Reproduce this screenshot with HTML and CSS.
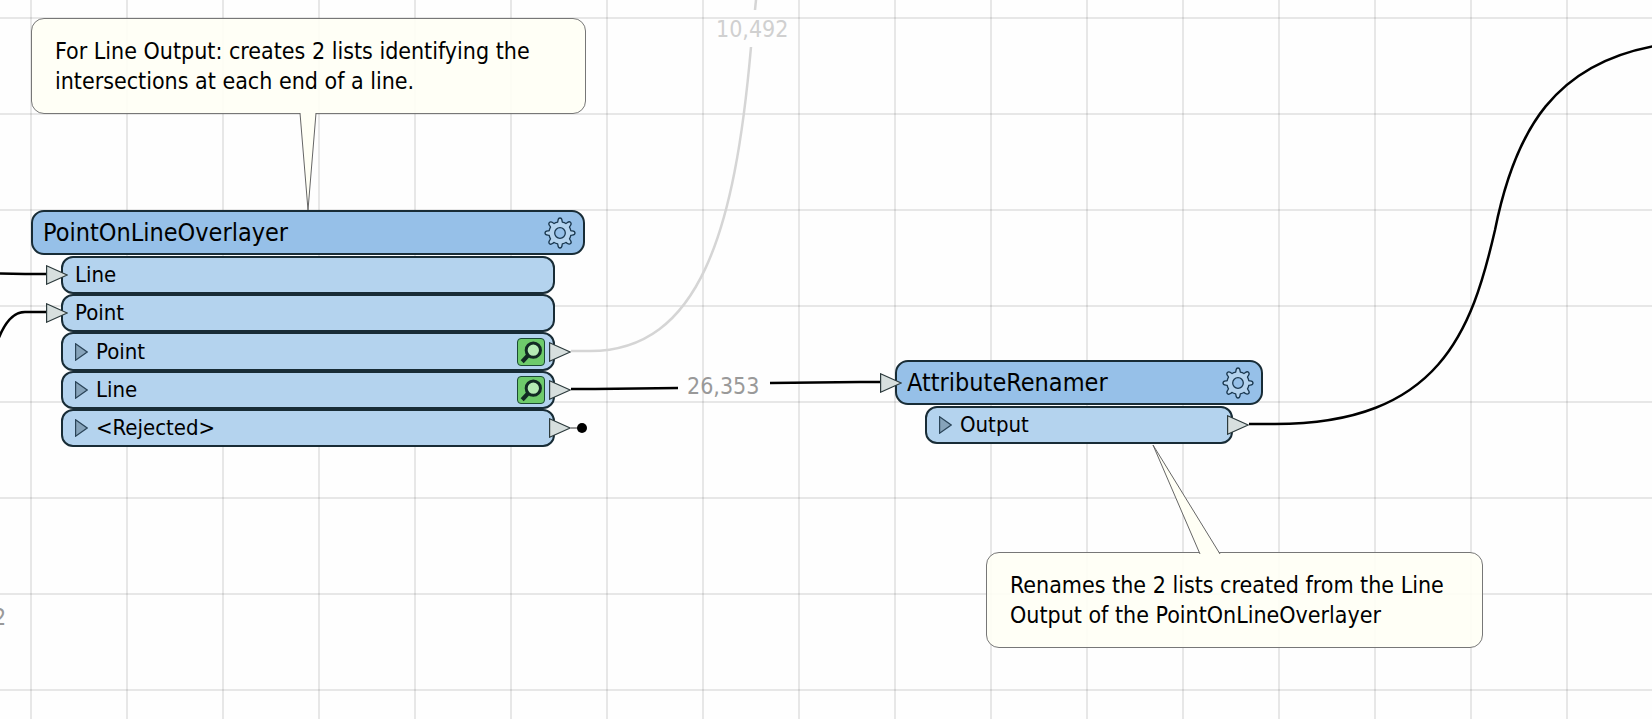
FILE: index.html
```html
<!DOCTYPE html>
<html lang="en">
<head>
<meta charset="utf-8">
<title>Workspace canvas</title>
<link rel="stylesheet" href="styles.css">
</head>
<body>
<svg class="defs" aria-hidden="true">
  <symbol id="gear" viewBox="0 0 32 32">
    <path d="M13.6 5.2 C14.2 4.2 13.4 1 16 1 S17.8 4.2 18.4 5.2 Q20.4 5.6 21.9 6.5 C23.1 6.2 24.8 3.4 26.6 5.4 S25.8 8.9 25.5 10.1 Q26.4 11.6 26.8 13.6 C27.8 14.2 31 13.4 31 16 S27.8 17.8 26.8 18.4 Q26.4 20.4 25.5 21.9 C25.8 23.1 28.6 24.8 26.6 26.6 S23.1 25.8 21.9 25.5 Q20.4 26.4 18.4 26.8 C17.8 27.8 18.6 31 16 31 S14.2 27.8 13.6 26.8 Q11.6 26.4 10.1 25.5 C8.9 25.8 7.2 28.6 5.4 26.6 S6.2 23.1 6.5 21.9 Q5.6 20.4 5.2 18.4 C4.2 17.8 1 18.6 1 16 S4.2 14.2 5.2 13.6 Q5.6 11.6 6.5 10.1 C6.2 8.9 3.4 7.2 5.4 5.4 S8.9 6.2 10.1 6.5 Q11.6 5.6 13.6 5.2 Z" fill="#b4d3ee" stroke="#1a3850" stroke-width="1.3"/>
    <circle cx="16" cy="16" r="5.3" fill="#96c0e8" stroke="#1a3850" stroke-width="1.3"/>
  </symbol>
  <symbol id="inspect" viewBox="0 0 28 28">
    <path d="M11.5 17 L4.5 24.5" stroke="#122a24" stroke-width="4.5" fill="none"/>
    <circle cx="16.5" cy="12" r="7.7" fill="#b5ecb4" stroke="#122a24" stroke-width="3.2"/>
  </symbol>
  <symbol id="port" viewBox="0 0 22 20">
    <path d="M.6 .8 L21.2 10 L.6 19.2 Z" fill="#d7dfde" stroke="#2c3a3c" stroke-width="1.2"/>
  </symbol>
  <symbol id="expand" viewBox="0 0 13 18">
    <path d="M.6 .8 L12.2 9 L.6 17.2 Z" fill="#86a3ba" stroke="#2a4458" stroke-width="1.2"/>
  </symbol>
</svg>

<main class="canvas">
  <svg class="wires" aria-hidden="true">
    <path class="wire" d="M0 273.5 L25 274 H47"/>
    <path class="wire" d="M-2 340 C6 319 15 312 25 312 H47"/>
    <path class="wire wire-faint" d="M571 351 H590 C700 351 735 230 751 47"/>
    <path class="wire wire-faint" d="M755 10 L756 0"/>
    <path class="wire" d="M571 389 H595 L678 388"/>
    <path class="wire" d="M770 383 L860 382 H880"/>
    <path class="wire" d="M1249 424 H1275 C1440 424 1472 330 1495 230 C1515 130 1555 62 1660 45"/>
    <path class="stub" d="M571 428 H580"/>
    <circle cx="582" cy="428" r="5"/>
  </svg>

  <span class="count count-faint count-a">10,492</span>
  <span class="count count-b">26,353</span>
  <span class="count count-c">2</span>

  <aside class="note note-a">
    <p>For Line Output: creates 2 lists identifying the<br>intersections at each end of a line.</p>
    <svg class="tail" width="18" height="98" viewBox="0 0 18 98"><path d="M1 0 L9 97 L17 0"/></svg>
  </aside>

  <aside class="note note-b">
    <p>Renames the 2 lists created from the Line<br>Output of the PointOnLineOverlayer</p>
    <svg class="tail" width="70" height="110" viewBox="0 0 70 110"><path d="M48 110 L1 1 L68 110"/></svg>
  </aside>

  <section class="node node-a">
    <header class="head">
      <h2>PointOnLineOverlayer</h2>
      <button class="gear" aria-label="Parameters"><svg><use href="#gear"/></svg></button>
    </header>
    <ul class="ports">
      <li class="row"><svg class="port in"><use href="#port"/></svg>Line</li>
      <li class="row"><svg class="port in"><use href="#port"/></svg>Point</li>
      <li class="row"><button class="expand" aria-label="Expand Point"><svg><use href="#expand"/></svg></button>Point<button class="inspect" aria-label="Inspect Point"><svg><use href="#inspect"/></svg></button><svg class="port out"><use href="#port"/></svg></li>
      <li class="row"><button class="expand" aria-label="Expand Line"><svg><use href="#expand"/></svg></button>Line<button class="inspect" aria-label="Inspect Line"><svg><use href="#inspect"/></svg></button><svg class="port out"><use href="#port"/></svg></li>
      <li class="row"><button class="expand" aria-label="Expand Rejected"><svg><use href="#expand"/></svg></button>&lt;Rejected&gt;<svg class="port out"><use href="#port"/></svg></li>
    </ul>
  </section>

  <section class="node node-b">
    <header class="head">
      <svg class="port in"><use href="#port"/></svg>
      <h2>AttributeRenamer</h2>
      <button class="gear" aria-label="Parameters"><svg><use href="#gear"/></svg></button>
    </header>
    <ul class="ports">
      <li class="row"><button class="expand" aria-label="Expand Output"><svg><use href="#expand"/></svg></button>Output<svg class="port out"><use href="#port"/></svg></li>
    </ul>
  </section>
</main>
</body>
</html>
```
FILE: styles.css
```css
* { box-sizing: border-box; }

body {
  margin: 0;
  font-family: "DejaVu Sans Condensed", "DejaVu Sans", sans-serif;
  color: #000;
}

h2, p, ul { margin: 0; padding: 0; }

button {
  display: block;
  padding: 0;
  border: 0;
  background: none;
}

button svg { display: block; width: 100%; height: 100%; }

.defs { position: absolute; width: 0; height: 0; }

.canvas {
  position: relative;
  min-height: 100vh;
  overflow: hidden;
  background-color: #fefefe;
  background-image:
    linear-gradient(to right, rgba(0, 0, 0, .09) 2px, transparent 2px),
    linear-gradient(to bottom, rgba(0, 0, 0, .09) 2px, transparent 2px);
  background-size: 96px 96px;
  background-position: 30px 17px;
}

.wires { position: absolute; inset: 0; width: 100%; height: 100%; }
.wire { fill: none; stroke: #000; stroke-width: 2.5; }
.wire-faint { stroke: #d5d5d5; }
.stub { stroke: #333; stroke-width: 1; }

.count { position: absolute; font-size: 23px; line-height: 30px; color: #999; }
.count-faint { color: #d0d0d0; }
.count-a { left: 716px; top: 14px; }
.count-b { left: 687px; top: 371px; }
.count-c { left: -7px; top: 602px; }

.note {
  position: absolute;
  padding: 17px 23px;
  border: 1px solid #777;
  border-radius: 13px;
  background: rgba(255, 255, 245, .9);
  font-size: 23px;
  line-height: 30px;
  white-space: nowrap;
}
.note-a { left: 31px; top: 18px; width: 555px; }
.note-b { left: 986px; top: 552px; width: 497px; }
.tail { position: absolute; }
.tail path { fill: #fffff5; stroke: #666; stroke-width: 1; }
.note-a .tail { left: 267px; top: 94px; }
.note-b .tail { left: 165px; bottom: 93px; }

.node { position: absolute; }
.node-a { left: 31px; top: 210px; width: 554px; }
.node-b { left: 895px; top: 360px; width: 368px; }

.head {
  position: relative;
  display: flex;
  align-items: center;
  justify-content: space-between;
  height: 45px;
  padding: 0 7px 0 10px;
  border: 2px solid #182c36;
  border-radius: 13px;
  background: #96c0e8;
}
.head h2 { font-size: 25px; font-weight: 400; line-height: 30px; }
.gear { width: 32px; height: 32px; }

.ports {
  display: flex;
  flex-direction: column;
  margin: 1px 30px 0;
  list-style: none;
}
.node-a .ports { height: 191px; }
.node-b .ports { height: 38px; }

.row {
  position: relative;
  display: flex;
  flex: 1;
  align-items: center;
  padding: 0 8px 0 12px;
  border: 2px solid #182c36;
  border-radius: 12px;
  background: #b4d3ee;
  font-size: 22px;
  line-height: 26px;
}
.expand { width: 13px; height: 18px; margin-right: 8px; }
.inspect {
  width: 28px;
  height: 28px;
  margin-left: auto;
  border: 1px solid #1b4a35;
  border-radius: 4px;
  background: #6ecb6b;
}

.port { position: absolute; top: 50%; width: 22px; height: 20px; margin-top: -10px; }
.in { left: -17px; }
.out { right: -18px; }
```
